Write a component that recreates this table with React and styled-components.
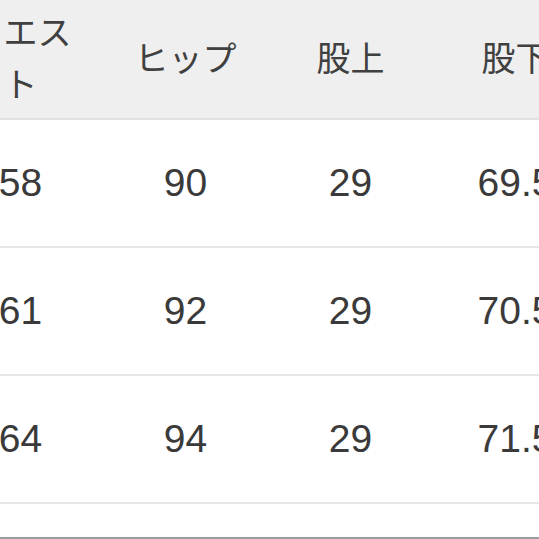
import React from 'react'
import styled, { createGlobalStyle } from 'styled-components'

const GlobalStyle = createGlobalStyle`
  html, body {
    margin: 0;
    padding: 0;
    background: #ffffff;
    overflow: hidden;
  }
  body {
    width: 539px;
    height: 539px;
  }
`

const Frame = styled.div`
  width: 539px;
  height: 539px;
  overflow: hidden;
  background: #fff;
  border-bottom: 2px solid #9c9c9c;
  box-sizing: border-box;
`

// table is wider than the shot, it is cut on both sides
const Table = styled.div`
  margin-left: -62px;
  width: 660px;
  font-family: "Liberation Sans", "Noto Sans CJK JP", sans-serif;
  color: #3a3a3a;
`

const HeaderRow = styled.div`
  display: grid;
  grid-template-columns: repeat(4, 165px);
  height: 118px;
  background: #efefef;
  border-bottom: 2px solid #e2e2e2;
`

const Row = styled.div`
  display: grid;
  grid-template-columns: repeat(4, 165px);
  height: 126px;
  border-bottom: 2px solid #e6e6e6;
`

const HeadCell = styled.div`
  display: flex;
  align-items: center;
  justify-content: center;
  text-align: center;
  padding: 0 18px 4px;
  font-family: "Noto Sans CJK JP", sans-serif;
  font-size: 34px;
  line-height: 52px;
  color: #404040;
`

const Cell = styled.div`
  display: flex;
  align-items: center;
  justify-content: center;
  font-size: 39px;
  white-space: nowrap;
`

const headers = ['ウエスト', 'ヒップ', '股上', '股下']

const rows = [
    ['58', '90', '29', '69.5'],
    ['61', '92', '29', '70.5'],
    ['64', '94', '29', '71.5'],
]

export default function App() {
    return (
        <Frame>
            <GlobalStyle />
            <Table>
                <HeaderRow>
                    {headers.map(h => <HeadCell key={h}>{h}</HeadCell>)}
                </HeaderRow>
                {rows.map((r, i) => (
                    <Row key={i}>
                        {r.map((v, j) => <Cell key={j}>{v}</Cell>)}
                    </Row>
                ))}
            </Table>
        </Frame>
    )
}
